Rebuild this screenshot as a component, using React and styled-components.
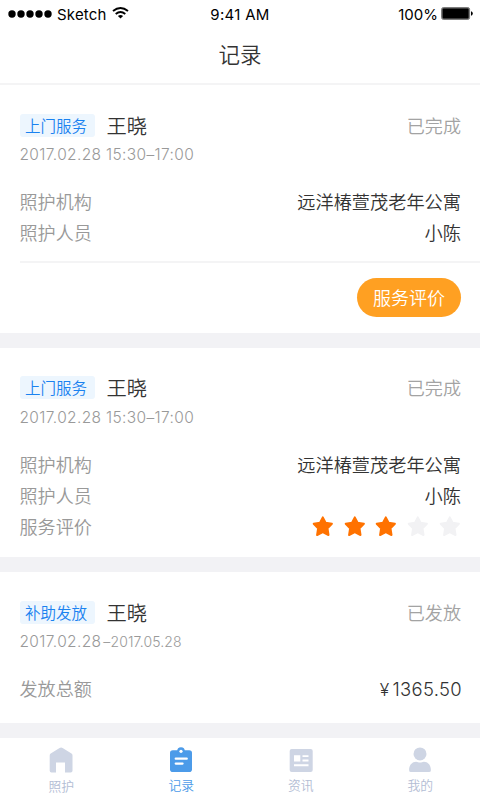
import React from "react";
import styled, { createGlobalStyle, css } from "styled-components";

const GlobalStyle = createGlobalStyle`
  * {
    box-sizing: border-box;
  }

  body {
    margin: 0;
    background: #f2f2f5;
    font-family: Inter, "Noto Sans CJK SC", sans-serif;
    font-weight: 350;
    color: #333;
  }
`;

const Screen = styled.div`
  display: flex;
  flex-direction: column;
  width: 480px;
  height: 800px;
  overflow: hidden;
  background: #f2f2f5;
  white-space: nowrap;
`;

const StatusBar = styled.div`
  display: grid;
  grid-template-columns: 1fr auto 1fr;
  align-items: center;
  height: 28px;
  padding: 0 7px 0 8px;
  background: #fff;
  color: #000;
  font-size: 15px;
  font-weight: 400;
  line-height: 29px;
`;

const Signal = styled.div`
  display: flex;
  align-items: center;
  letter-spacing: 0.2px;

  svg:last-child {
    margin: 0 0 3px 5px;
  }
`;

const Dots = styled.svg`
  margin: 0 5px 1px 0;
`;

const Clock = styled.span`
  padding-right: 1px;
  letter-spacing: 0.3px;
`;

const Battery = styled.div`
  display: flex;
  align-items: center;
  justify-content: flex-end;
  gap: 3px;

  svg {
    margin-bottom: 2px;
  }
`;

const Title = styled.h1`
  height: 57px;
  margin: 0;
  border-bottom: 2px solid #f4f4f5;
  background: #fff;
  font-size: 21.5px;
  font-weight: 350;
  line-height: 54px;
  text-align: center;
`;

const Card = styled.section`
  flex: none;
  height: ${({ $height }) => $height}px;
  margin-bottom: 15px;
  padding: ${({ $top }) => $top}px 19px 0 19.5px;
  background: #fff;
`;

const CardHead = styled.div`
  display: flex;
  align-items: center;
  height: 23px;
`;

const Tag = styled.span`
  width: 75px;
  height: 23px;
  padding-right: 2px;
  border-radius: 3px;
  background: #edf6fe;
  color: #1a82f0;
  font-size: 15.5px;
  line-height: 26px;
  text-align: center;
`;

const Name = styled.span`
  flex: 1;
  margin-left: 12px;
  padding-top: 2px;
  font-size: 20.3px;
  line-height: 24px;
`;

const Status = styled.span`
  color: #a3a3a3;
  font-size: 18.1px;
  line-height: 24px;
`;

const DateLine = styled.div`
  height: 20px;
  margin: ${({ $gap }) => $gap || 8}px 0 21px;
  color: #999;
  font-size: 15.5px;
  letter-spacing: 0.35px;
  line-height: 20px;
`;

const EndDate = styled.span`
  margin-left: 2px;
  font-size: 14px;
  letter-spacing: 0.1px;
`;

const Row = styled.div`
  display: flex;
  align-items: center;
  justify-content: space-between;
  height: 31px;
  font-size: 18.2px;
  line-height: 31px;

  > span {
    padding-top: 2px;
  }
`;

const Label = styled.span`
  color: #999;
  font-size: 18.1px;
`;

const Amount = styled.span`
  margin-right: -1px;
  font-size: 18.4px;
  letter-spacing: 0.35px;
`;

const Yen = styled.span`
  margin-right: 3px;
  font-size: 17.5px;
`;

const Stars = styled.div`
  display: flex;
  gap: 9.8px;

  svg {
    display: block;
  }
`;

const CardFoot = styled.div`
  display: flex;
  justify-content: flex-end;
  margin: 13px -19px 0 0;
  padding: 15px 19px 0 0;
  border-top: 2px solid #f4f4f5;
`;

const RateButton = styled.button`
  width: 104px;
  height: 39px;
  padding: 0;
  border: 0;
  border-radius: 20px;
  background: #ffa022;
  color: #fff;
  font: inherit;
  font-size: 18px;
  line-height: 41px;
`;

const TabBar = styled.nav`
  display: flex;
  flex: 1;
  padding-left: 1px;
  background: #fff;
`;

const Tab = styled.a`
  display: flex;
  flex: 1;
  flex-direction: column;
  align-items: center;
  padding-top: 9px;
  color: #ced5e4;
  font-size: 12.8px;
  line-height: 18px;

  svg {
    margin-bottom: 4px;
  }

  span {
    color: #b3bdd4;
  }

  &:first-child {
    padding-right: 1px;
  }

  &:first-child span {
    padding: 1px 0 0 1px;
  }

  ${({ $active }) =>
    $active &&
    css`
      color: #4c9be9;

      span {
        color: #4c9be9;
      }
    `}
`;

const Star = ({ on }) => (
  <svg width="22" height="22" viewBox="0 0 22 22">
    <path
      d="M10.8 1.4l2.8 5.3 6.3 1-4.4 4.6 1 6.7-5.7-2.9L5.1 19l1-6.7-4.4-4.6 6.3-1z"
      fill={on ? "#ff7200" : "#f2f2f4"}
      stroke={on ? "#ff7200" : "#f2f2f4"}
      strokeWidth="2"
      strokeLinejoin="round"
    />
  </svg>
);

const HomeIcon = () => (
  <svg width="24" height="26" viewBox="0 0 24 26">
    <path
      d="M10.6.9 1.7 6.6Q.7 7.3.7 8.6v15.1q0 1.8 1.8 1.8H7v-10h9v10h5.7q1.8 0 1.8-1.8V8.6q0-1.3-1-2L13.6.9q-1.5-.9-3 0z"
      fill="currentColor"
    />
  </svg>
);

const RecordIcon = () => (
  <svg width="24" height="26" viewBox="0 0 24 26">
    <rect x="1" y="3.3" width="22" height="21.8" rx="2.8" fill="currentColor" />
    <circle cx="12" cy="4" r="3.8" fill="currentColor" />
    <circle cx="12" cy="4.3" r="1.6" fill="#fff" />
    <path d="M6.7 11.7h11.1M6.7 16.6h6.9" stroke="#fff" strokeWidth="2.2" strokeLinecap="round" />
  </svg>
);

const NewsIcon = () => (
  <svg width="24" height="26" viewBox="0 0 24 26">
    <rect x=".7" y="1.9" width="23" height="23.2" rx="2" fill="currentColor" />
    <path d="M5 8.2h6.3v6.2H5zM13.5 8.2h6V10h-6zM13.5 12.5h6v1.9h-6zM5 17.3h14.5v2H5z" fill="#fff" />
  </svg>
);

const UserIcon = () => (
  <svg width="24" height="26" viewBox="0 0 24 26">
    <circle cx="12" cy="6.9" r="6.5" fill="currentColor" />
    <path
      d="M1.1 23.2c0-5.6 3.4-8.4 7-8.4 1.5.5 2.4.8 3.9.8s2.4-.3 3.9-.8c3.6 0 7 2.8 7 8.4q0 1.9-1.9 1.9H3q-1.9 0-1.9-1.9z"
      fill="currentColor"
    />
  </svg>
);

const tabs = [
  { label: "照护", icon: <HomeIcon /> },
  { label: "记录", icon: <RecordIcon />, active: true },
  { label: "资讯", icon: <NewsIcon /> },
  { label: "我的", icon: <UserIcon /> },
];

const Head = ({ tag, status }) => (
  <CardHead>
    <Tag>{tag}</Tag>
    <Name>王晓</Name>
    <Status>{status}</Status>
  </CardHead>
);

const CareRows = () => (
  <>
    <Row>
      <Label>照护机构</Label>
      <span>远洋椿萱茂老年公寓</span>
    </Row>
    <Row>
      <Label>照护人员</Label>
      <span>小陈</span>
    </Row>
  </>
);

const App = () => (
  <Screen>
    <GlobalStyle />
    <StatusBar>
      <Signal>
        <Dots width="44" height="8" viewBox="0 0 44 8">
          {[4, 13, 22, 31, 40].map((x) => (
            <circle key={x} cx={x} cy="4" r="3.7" />
          ))}
        </Dots>
        Sketch
        <svg width="17" height="12" viewBox="0 0 17 12">
          <path d="M1 4.1Q8.5-2 16 4.1M3.7 7Q8.5 3.1 13.3 7" fill="none" stroke="#000" strokeWidth="1.9" />
          <path d="M8.5 11.6 5.9 9Q8.5 7 11.1 9z" />
        </svg>
      </Signal>
      <Clock>9:41 AM</Clock>
      <Battery>
        100%
        <svg width="32" height="13" viewBox="0 0 32 13">
          <rect x=".6" y=".6" width="28" height="11.8" rx="1.8" fill="#777" stroke="#777" />
          <rect x="1.6" y="1.6" width="26" height="9.8" rx="1" />
          <path d="M30 4.2q1.8.5 1.8 2.3T30 8.8z" />
        </svg>
      </Battery>
    </StatusBar>
    <Title>记录</Title>

    <Card $height={248} $top={29}>
      <Head tag="上门服务" status="已完成" />
      <DateLine>2017.02.28 15:30–17:00</DateLine>
      <CareRows />
      <CardFoot>
        <RateButton>服务评价</RateButton>
      </CardFoot>
    </Card>

    <Card $height={209} $top={28}>
      <Head tag="上门服务" status="已完成" />
      <DateLine $gap={9}>2017.02.28 15:30–17:00</DateLine>
      <CareRows />
      <Row>
        <Label>服务评价</Label>
        <Stars>
          {[1, 2, 3, 4, 5].map((n) => (
            <Star key={n} on={n <= 3} />
          ))}
        </Stars>
      </Row>
    </Card>

    <Card $height={151} $top={29}>
      <Head tag="补助发放" status="已发放" />
      <DateLine>
        2017.02.28<EndDate>–2017.05.28</EndDate>
      </DateLine>
      <Row>
        <Label>发放总额</Label>
        <Amount>
          <Yen>¥</Yen>1365.50
        </Amount>
      </Row>
    </Card>

    <TabBar>
      {tabs.map(({ label, icon, active }) => (
        <Tab key={label} $active={active}>
          {icon}
          <span>{label}</span>
        </Tab>
      ))}
    </TabBar>
  </Screen>
);

export default App;
